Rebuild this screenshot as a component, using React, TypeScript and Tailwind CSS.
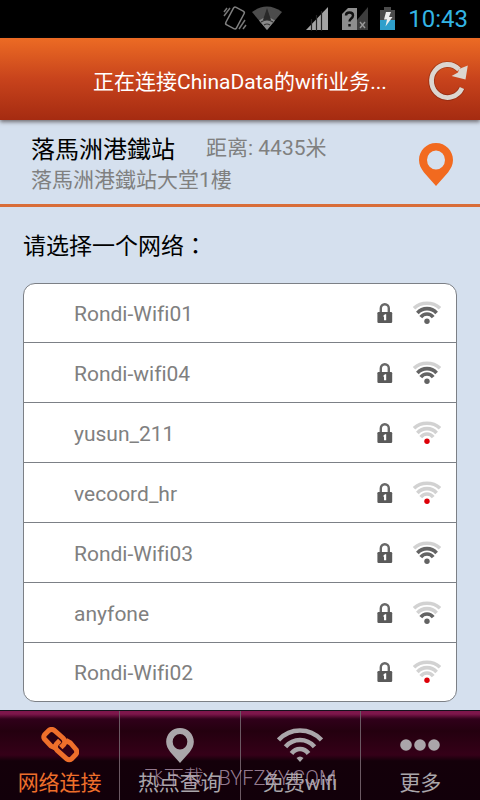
import type { ReactNode } from 'react'
import clsx from 'clsx'

type Network = { name: string; level: number }

const networks: Network[] = [
  { name: 'Rondi-Wifi01', level: 2 },
  { name: 'Rondi-wifi04', level: 2 },
  { name: 'yusun_211', level: 0 },
  { name: 'vecoord_hr', level: 0 },
  { name: 'Rondi-Wifi03', level: 2 },
  { name: 'anyfone', level: 1 },
  { name: 'Rondi-Wifi02', level: 0 },
]

function LockIcon() {
  return (
    <svg width="16" height="22" viewBox="0 0 16 22" aria-hidden="true">
      <path d="M3.800 11V6.200a4 4 0 0 1 8 0V11" fill="none" stroke="#686868" strokeWidth="2.400" />
      <rect x="0.400" y="10" width="14.800" height="11" rx="1.200" fill="#5a5a5a" />
      <path d="M5.800 14.200 8 12.200h1.200v6H7v-3.600z" fill="#fff" />
    </svg>
  )
}

function SignalIcon({ level }: { level: number }) {
  const tone = (n: number) => (level >= n ? '#636363' : '#d2d2d2')
  return (
    <svg width="28" height="24" viewBox="0 0 28 24" fill="none" strokeWidth="3.600" aria-hidden="true">
      <path d="M1 7.200C8 .6 20 .6 27 7.200" stroke={tone(3)} />
      <path d="M4.400 12C9.500 6.200 18.500 6.200 23.600 12" stroke={tone(2)} />
      <path d="M7.800 16.200C11 12 17 12 20.200 16.200" stroke={tone(1)} />
      <circle cx="14" cy="20.200" r="2.700" fill={level === 0 ? '#dd0008' : '#636363'} />
    </svg>
  )
}

function PinIcon({ className }: { className?: string }) {
  return (
    <svg viewBox="0 0 34 43" className={className} aria-hidden="true">
      <path
        fill="currentColor"
        fillRule="evenodd"
        d="M17 0C7.500 0 0 7.600 0 17c0 5 2.200 8.500 5 12.500L17 43l12-13.500c2.800-4 5-7.500 5-12.500C34 7.600 26.500 0 17 0zm0 7.500a9 9.500 0 1 1 0 19 9 9.500 0 0 1 0-19z"
      />
    </svg>
  )
}

function RefreshIcon() {
  return (
    <svg width="42" height="42" viewBox="0 0 42 42" aria-hidden="true">
      <path d="M34 28A16 16.500 0 1 1 31 9.500" fill="none" stroke="#5a1a08" strokeOpacity="0.350" strokeWidth="6.600" />
      <path d="M34 28A16 16.500 0 1 1 31 9.500" fill="none" stroke="#dcd6d0" strokeWidth="4.800" />
      <path d="M39.800 5.400 37.500 19.600 23.600 16 30 12.500 31 9z" fill="#dcd6d0" />
    </svg>
  )
}

function LinkIcon() {
  return (
    <svg width="38" height="36" viewBox="0 0 38 36" fill="none" stroke="#ee6f2b" strokeWidth="5" strokeLinejoin="round" aria-hidden="true">
      <path d="M15.500 21.500 10 19 3.500 12c-1-1.500-.8-3 0-4.200l4.300-4.300c1.500-1.200 4-1.200 5.500-.2l8.700 7.700c2 2 2.300 4.500.8 6.500l-3 3" />
      <path d="M25 13.500l4.500 2.500 5.500 6.500c1 1.500.8 3.500 0 4.700l-4.300 4.500c-1.500 1.200-3.500 1.200-5 .2l-9.500-8.500c-2-2-2.300-4.500-.8-6.500l3.400-3.400" />
    </svg>
  )
}

function WifiIcon() {
  return (
    <svg width="46" height="34" viewBox="0 0 46 34" fill="none" stroke="#aaa6aa" strokeWidth="4.600" aria-hidden="true">
      <path d="M1.500 12C13.500-.6 32.500-.6 44.500 12" />
      <path d="M8.500 18.800C16.500 9.800 29.500 9.800 37.500 18.800" />
      <path d="M14.500 25.500C19 19.500 27 19.500 31.500 25.500" />
      <path d="M19.500 30q3.500-3 7 0L23 34z" fill="#aaa6aa" stroke="none" />
    </svg>
  )
}

function DotsIcon() {
  return (
    <svg width="40" height="12" viewBox="0 0 40 12" fill="#aaa6aa" aria-hidden="true">
      <circle cx="6" cy="6" r="5.800" />
      <circle cx="20" cy="6" r="5.800" />
      <circle cx="34" cy="6" r="5.800" />
    </svg>
  )
}

function StatusBar() {
  return (
    <div className="flex h-[38px] items-center justify-end bg-black pr-3">
      <svg width="180" height="28" viewBox="0 0 180 28" aria-hidden="true">
        <g fill="none" stroke="#777" strokeWidth="1.500">
          <rect x="7" y="3" width="12" height="20" rx="2" transform="rotate(28 13 13)" stroke="#808080" />
          <path d="M2 11l6-8M2 7l3-4M17 24l6-9M21 24l3-4" />
        </g>
        <path d="M30 7q15-11 30 0L45 25z" fill="#4c4c4c" />
        <path d="M37 15.500q8-6 16 0L45 25z" fill="#888" />
        <path d="M45 3l4 12h-8z" fill="#292929" />
        <path d="M39 17q6-4 12 0M42 20q3-2 6 0" fill="none" stroke="#333" strokeWidth="1.200" />
        <path d="M84 25 106 2v23z" fill="#a3a3a3" />
        <path d="M89.500 14v12M94.500 10v16M99.500 6v20" stroke="#222" strokeWidth="1.200" />
        <path d="M120 9l6-6h9v22h-15z" fill="#8e8e8e" />
        <path d="M135 15 146 2v23h-11z" fill="#3d3d3d" />
        <path d="M124 10.500c0-4 7-4 7 0 0 3-3.500 3-3.500 6M127.500 19v2.500" fill="none" stroke="#111" strokeWidth="2.400" />
        <path d="M138 17l5 6M143 17l-5 6" stroke="#999" strokeWidth="1.400" />
        <path d="M158 5h4V2h7v3h4v10h-15z" fill="#4b4b4b" />
        <path d="M158 15h15v10h-15z" fill="#2f9fcb" />
        <path d="M164 7h5l-2 5h3.500l-7 9.500 1.500-7h-3z" fill="#eee" />
      </svg>
      <time className="ml-[6px] text-2xl leading-none text-[#33b5e5]">10:43</time>
    </div>
  )
}

function Tab({ label, active, children }: { label: string; active?: boolean; children: ReactNode }) {
  return (
    <a
      href="#"
      aria-current={active ? 'page' : undefined}
      className={clsx(
        'flex flex-1 flex-col items-center border-l border-[#6b5963] pt-3 text-[21px] leading-8 first:border-l-0',
        active ? 'text-[#ee6f2b]' : 'text-[#aaa6aa]',
      )}
    >
      <span className="flex h-11 items-center">{children}</span>
      {label}
    </a>
  )
}

export default function App() {
  return (
    <div className="flex min-h-screen flex-col bg-[#d5e0ee] font-[Roboto,'Noto_Sans_CJK_SC',sans-serif]">
      <StatusBar />
      <header className="relative flex h-[82px] items-center justify-center bg-linear-to-b from-[#ec6b24] via-[#c8431c] to-[#a52b11] px-[60px] shadow-[0_2px_4px_rgba(70,60,60,0.7)]">
        <h1 className="pt-2 text-[21px] text-white [font-variant-ligatures:none]">正在连接ChinaData的wifi业务...</h1>
        <button type="button" aria-label="刷新" className="absolute top-[22px] right-[10px]">
          <RefreshIcon />
        </button>
      </header>

      <section className="flex items-center justify-between border-b-3 border-[#d96d38] pt-3 pr-[27px] pb-2 pl-[31px]">
        <div>
          <div className="flex items-start gap-[31px]">
            <h2 className="text-2xl leading-9 text-black">落馬洲港鐵站</h2>
            <p className="text-[21px] leading-8 text-[#808080]">距离: 4435米</p>
          </div>
          <p className="pb-1 text-[21px] leading-6 text-[#808080]">落馬洲港鐵站大堂1樓</p>
        </div>
        <PinIcon className="h-[43px] w-[34px] text-[#f26a1f]" />
      </section>

      <main className="flex-1 px-[23px] pb-2">
        <h2 className="pt-6 pb-5 text-[23px] leading-8 text-black">
          请选择一个网络<span className="font-['Noto_Sans_CJK_TC',sans-serif] leading-none">：</span>
        </h2>
        <ul className="rounded-xl border border-[#7c8086] bg-white">
          {networks.map((network) => (
            <li key={network.name} className="h-[60px] border-b border-[#7c8086] first:h-[59px] last:h-[58px] last:border-b-0">
              <button type="button" className="flex h-full w-full items-center pr-[15px] pl-[50px] text-left text-[21px] text-[#808080]">
                <span className="flex-1 pt-1 [font-variant-ligatures:none]">{network.name}</span>
                <LockIcon />
                <span className="ml-5">
                  <SignalIcon level={network.level} />
                </span>
              </button>
            </li>
          ))}
        </ul>
      </main>

      <nav className="relative flex h-[90px] border-t border-[#14101c] bg-[linear-gradient(#7d164b_0px,#7d164b_3px,#30001a_8px,#24000f_20px,#350018_44px,#14000a_50px,#12000a_100%)]">
        <Tab label="网络连接" active>
          <LinkIcon />
        </Tab>
        <Tab label="热点查询">
          <PinIcon className="h-[35px] w-7" />
        </Tab>
        <Tab label="免费wifi">
          <WifiIcon />
        </Tab>
        <Tab label="更多">
          <DotsIcon />
        </Tab>
        <p className="pointer-events-none absolute inset-x-0 bottom-2 text-center text-xl leading-7 font-light text-[#b79cb4]/80">
          飞下载 · BYFZXY.COM
        </p>
      </nav>
    </div>
  )
}
